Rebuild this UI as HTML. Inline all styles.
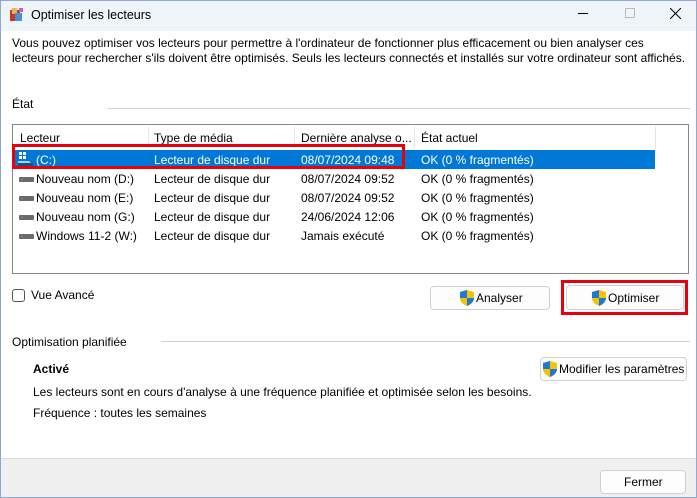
<!DOCTYPE html>
<html><head><meta charset="utf-8"><style>
*{margin:0;padding:0;box-sizing:border-box}
body{width:697px;height:498px;overflow:hidden;background:#fff;font-family:"Liberation Sans",sans-serif;font-size:12px;color:#000;position:relative}
.a{position:absolute;white-space:nowrap}
.frame{position:absolute;left:0;top:0;width:697px;height:498px;border:1px solid #8fa9d6;pointer-events:none}
.title{left:0;top:0;width:697px;height:31px;background:#eff4f9}
.btn{position:absolute;background:#fdfdfd;border:1px solid #d0d0d0;border-radius:4px;text-align:center;font-size:12px}
.row{position:absolute;left:14px;width:641px;height:19px}
.row span{position:absolute;top:3px}
.drv{position:absolute;left:5px;top:8px;width:15px;height:5px;background:#6a6a6a;border-radius:1px}
.drv:after{content:"";position:absolute;left:2px;top:2px;width:2px;height:1px;background:#3c3}
</style></head><body>
<div class="a title"></div>
<svg class="a" style="left:9px;top:7px" width="16" height="16"><rect x="1" y="3" width="10" height="11" fill="#c0392b"/><rect x="3" y="1" width="5" height="6" fill="#e9b949"/><rect x="6" y="6" width="7" height="8" fill="#4a8fd8"/><rect x="10" y="1" width="4" height="4" fill="#c85ad8"/></svg>
<div class="a" style="left:31px;top:8px;font-size:12.5px">Optimiser les lecteurs</div>
<div class="a" style="left:578px;top:13px;width:10px;height:1px;background:#000"></div>
<div class="a" style="left:625px;top:8px;width:10px;height:10px;border:1px solid #bbb"></div>
<svg class="a" style="left:670px;top:8px" width="11" height="11"><path d="M0 0L11 11M11 0L0 11" stroke="#000" stroke-width="1"/></svg>
<div class="a" style="left:12px;top:36px;line-height:15px">Vous pouvez optimiser vos lecteurs pour permettre à l'ordinateur de fonctionner plus efficacement ou bien analyser ces<br>lecteurs pour rechercher s'ils doivent être optimisés. Seuls les lecteurs connectés et installés sur votre ordinateur sont affichés.</div>
<div class="a" style="left:12px;top:97px">État</div>
<div class="a" style="left:108px;top:108px;width:582px;height:1px;background:#d0d0d0"></div>
<div class="a" style="left:12px;top:124px;width:677px;height:150px;border:1px solid #828790;background:#fff"></div>
<div class="a" style="left:148px;top:126px;width:1px;height:22px;background:#e5e5e5"></div>
<div class="a" style="left:294px;top:126px;width:1px;height:22px;background:#e5e5e5"></div>
<div class="a" style="left:414px;top:126px;width:1px;height:22px;background:#e5e5e5"></div>
<div class="a" style="left:655px;top:126px;width:1px;height:22px;background:#e5e5e5"></div>
<div class="a" style="left:20px;top:131px">Lecteur</div>
<div class="a" style="left:154px;top:131px">Type de média</div>
<div class="a" style="left:301px;top:131px">Dernière analyse o...</div>
<div class="a" style="left:421px;top:131px">État actuel</div>
<div class="row" style="top:150px;background:#0078d7;color:#fff">
<svg style="position:absolute;left:4px;top:2px" width="16" height="14"><rect x="1" y="0" width="3" height="3" fill="#fff"/><rect x="5" y="0" width="3" height="3" fill="#fff"/><rect x="1" y="4" width="3" height="3" fill="#fff"/><rect x="5" y="4" width="3" height="3" fill="#fff"/><path d="M0 9L11 9L15 13L0 13Z" fill="#9fd4f5"/><rect x="0" y="11" width="15" height="3" fill="#1f4f7a"/></svg>
<span style="left:22px">(C:)</span><span style="left:140px">Lecteur de disque dur</span><span style="left:287px">08/07/2024 09:48</span><span style="left:407px">OK (0 % fragmentés)</span></div>
<div class="row" style="top:169px"><i class="drv"></i><span style="left:22px">Nouveau nom (D:)</span><span style="left:140px">Lecteur de disque dur</span><span style="left:287px">08/07/2024 09:52</span><span style="left:407px">OK (0 % fragmentés)</span></div>
<div class="row" style="top:188px"><i class="drv"></i><span style="left:22px">Nouveau nom (E:)</span><span style="left:140px">Lecteur de disque dur</span><span style="left:287px">08/07/2024 09:52</span><span style="left:407px">OK (0 % fragmentés)</span></div>
<div class="row" style="top:207px"><i class="drv"></i><span style="left:22px">Nouveau nom (G:)</span><span style="left:140px">Lecteur de disque dur</span><span style="left:287px">24/06/2024 12:06</span><span style="left:407px">OK (0 % fragmentés)</span></div>
<div class="row" style="top:226px"><i class="drv"></i><span style="left:22px">Windows 11-2 (W:)</span><span style="left:140px">Lecteur de disque dur</span><span style="left:287px">Jamais exécuté</span><span style="left:407px">OK (0 % fragmentés)</span></div>
<div class="a" style="left:12px;top:144px;width:393px;height:25px;border:3px solid #e8000b"></div>
<div class="a" style="left:12px;top:289px;width:13px;height:13px;border:1px solid #555;border-radius:3px"></div>
<div class="a" style="left:31px;top:288px">Vue Avancé</div>
<svg width="0" height="0" style="position:absolute"><defs><g id="sh"><path d="M7 0L14 2L14 8C14 12 10 15 7 16C4 15 0 12 0 8L0 2Z" fill="#f5c300"/><path d="M7 0L7 8L0 8L0 2Z" fill="#1e78d6"/><path d="M7 8L14 8C14 12 10 15 7 16Z" fill="#1e78d6"/></g></defs></svg>
<div class="btn" style="left:430px;top:286px;width:120px;height:24px"></div>
<svg class="a" style="left:460px;top:290px" width="14" height="16"><use href="#sh"/></svg>
<div class="a" style="left:476px;top:291px">Analyser</div>
<div class="btn" style="left:566px;top:285px;width:118px;height:25px"></div>
<svg class="a" style="left:592px;top:290px" width="14" height="16"><use href="#sh"/></svg>
<div class="a" style="left:608px;top:291px">Optimiser</div>
<div class="a" style="left:561px;top:280px;width:127px;height:35px;border:3px solid #e8000b"></div>
<div class="a" style="left:12px;top:335px">Optimisation planifiée</div>
<div class="a" style="left:161px;top:341px;width:529px;height:1px;background:#d0d0d0"></div>
<div class="a" style="left:33px;top:362px;font-weight:bold">Activé</div>
<div class="btn" style="left:540px;top:357px;width:147px;height:24px"></div>
<svg class="a" style="left:543px;top:361px" width="14" height="16"><use href="#sh"/></svg>
<div class="a" style="left:559px;top:362px">Modifier les paramètres</div>
<div class="a" style="left:33px;top:385px">Les lecteurs sont en cours d'analyse à une fréquence planifiée et optimisée selon les besoins.</div>
<div class="a" style="left:33px;top:406px">Fréquence : toutes les semaines</div>
<div class="a" style="left:0;top:458px;width:697px;height:40px;background:#f0f0f0;border-top:1px solid #dcdcdc"></div>
<div class="btn" style="left:600px;top:470px;width:86px;height:24px"></div>
<div class="a" style="left:624px;top:475px">Fermer</div>
<div class="frame"></div>
</body></html>
